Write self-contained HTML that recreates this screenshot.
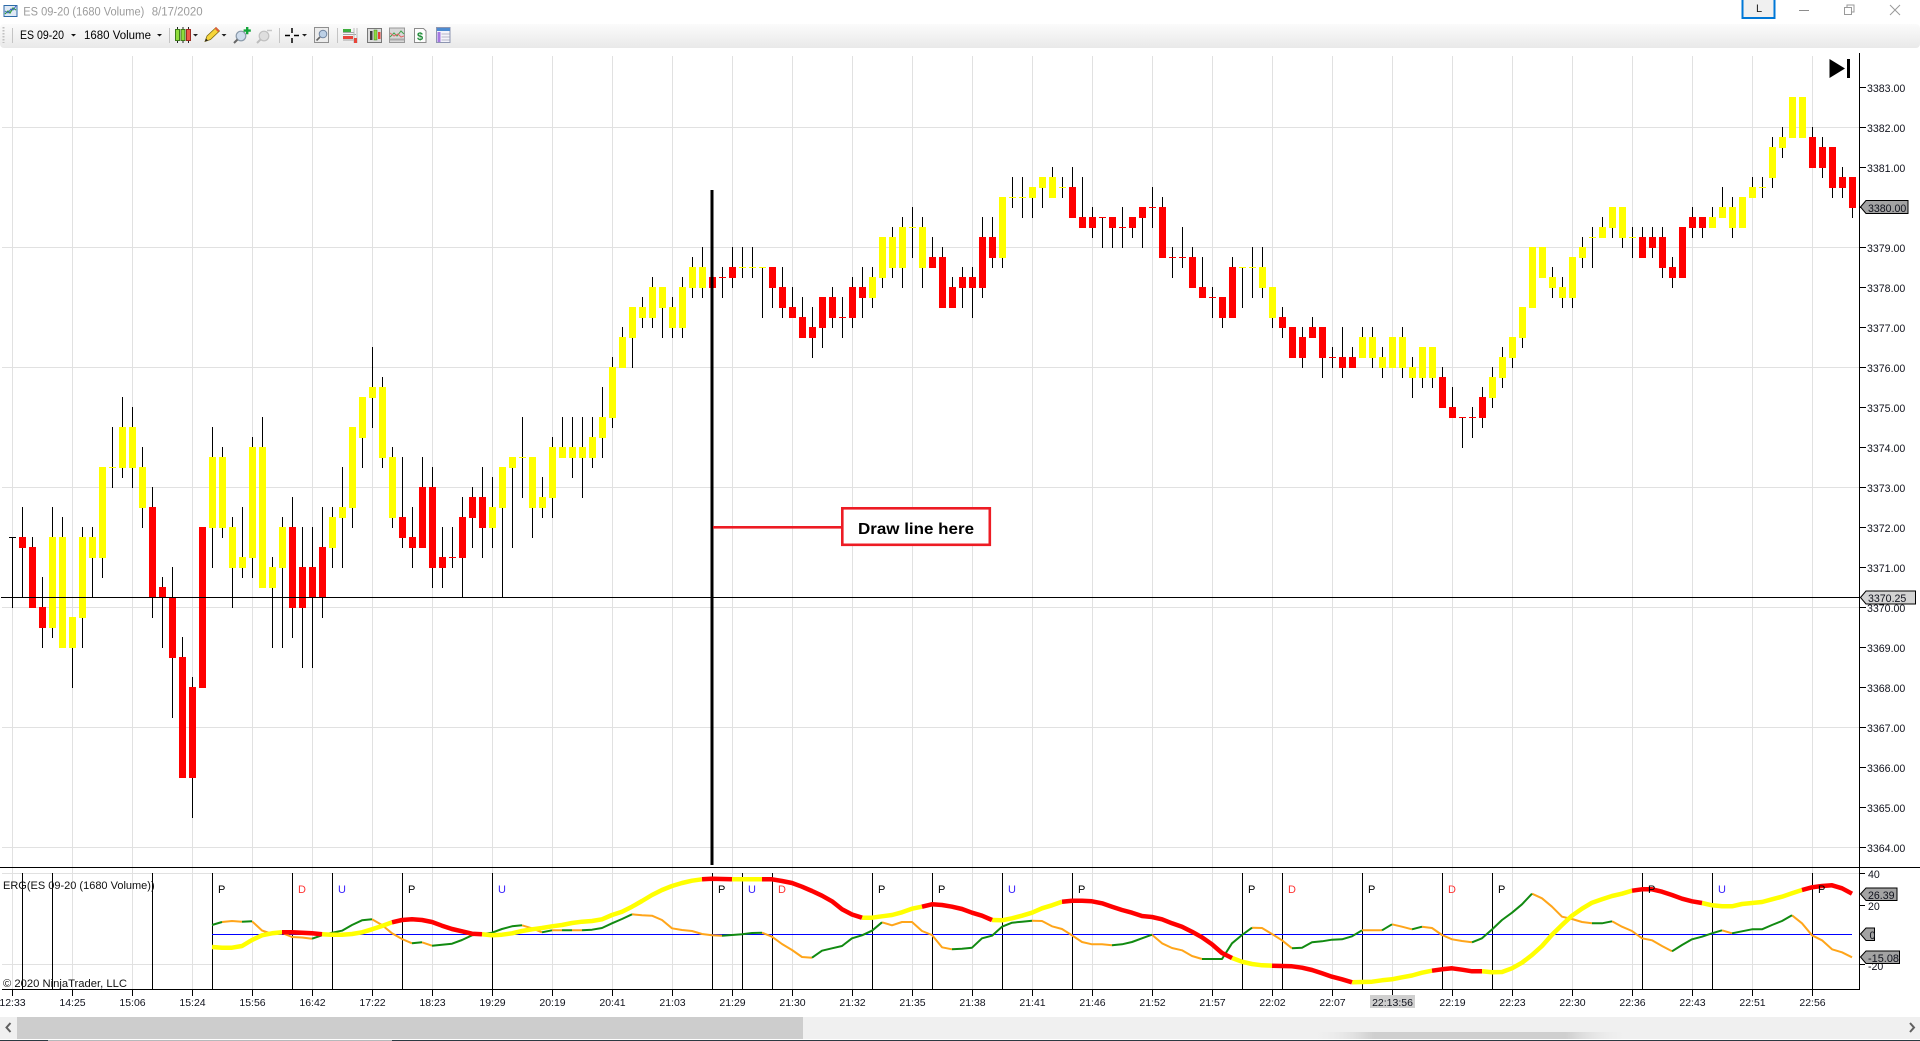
<!DOCTYPE html>
<html lang="en"><head><meta charset="utf-8"><title>ES 09-20 (1680 Volume)</title>
<style>
html,body{margin:0;padding:0;background:#fff;overflow:hidden}
svg{display:block}
text{font-family:"Liberation Sans",sans-serif}
.p text{font-size:10.6px;fill:#10121c}
.t text{font-size:10.5px;fill:#10121c;text-anchor:middle}
.s text{font-size:11.5px;fill:#000}
.l text{font-size:11px}
</style></head><body>
<svg width="1920" height="1041" viewBox="0 0 1920 1041" xmlns="http://www.w3.org/2000/svg">
<defs>
<linearGradient id="tb" x1="0" y1="0" x2="0" y2="1"><stop offset="0" stop-color="#fbfbfb"/><stop offset="1" stop-color="#e9e9e9"/></linearGradient>
<linearGradient id="sh" x1="0" y1="0" x2="0" y2="1"><stop offset="0" stop-color="#f0f0f0"/><stop offset="1" stop-color="#d0d0d0"/></linearGradient>
<linearGradient id="shx" x1="0" y1="0" x2="1" y2="0"><stop offset="0" stop-color="#f0f0f0" stop-opacity="0"/><stop offset=".2" stop-color="#cfcfcf"/><stop offset=".8" stop-color="#cfcfcf"/><stop offset="1" stop-color="#f0f0f0" stop-opacity="0"/></linearGradient>
</defs>
<rect width="1920" height="1041" fill="#fff"/>

<!-- title bar -->
<g>
<rect x="4" y="5.5" width="13" height="11" fill="#dfe9f5" stroke="#2d6aa8"/>
<path d="M5 14l3-3 2 2 3-5 3 2" fill="none" stroke="#2e9e3c" stroke-width="1.2"/>
<path d="M5 11l3 2 3-4 2 1 3-4" fill="none" stroke="#3a5fc0" stroke-width="1"/>
<text x="23.3" y="15.5" font-size="11.5" fill="#9b9b9b" textLength="121" lengthAdjust="spacingAndGlyphs">ES 09-20 (1680 Volume)</text>
<text x="151.7" y="15.5" font-size="11.5" fill="#9b9b9b" textLength="51" lengthAdjust="spacingAndGlyphs">8/17/2020</text>
<rect x="1742.5" y="-2" width="32" height="20" fill="#f0f0f0" stroke="#0078d7" stroke-width="2"/>
<text x="1759" y="12" font-size="11" fill="#222" text-anchor="middle">L</text>
<path d="M1799 10.5h10" stroke="#8c8c8c" stroke-width="1"/>
<path d="M1844.5 7.5h7v7h-7zM1847 7.5v-2.500h7v7h-2.500" fill="none" stroke="#9a9a9a" stroke-width="1"/>
<path d="M1890 5l10 10M1900 5l-10 10" stroke="#9a9a9a" stroke-width="1" fill="none"/>
</g>

<!-- toolbar -->
<rect x="0" y="24" width="1920" height="24" rx="4" fill="url(#tb)"/>
<g>
<path d="M3.500 27v16" stroke="#c0c0c0" stroke-width="2" stroke-dasharray="1.500 1.500"/>
<path d="M12.500 28v15M169.500 28v15M279.500 28v15M337.500 28v15" stroke="#c4c4c4"/>
<text x="20" y="39" font-size="11.500" fill="#000" textLength="44" lengthAdjust="spacingAndGlyphs">ES 09-20</text>
<path d="M71 34h5l-2.500 2.500z" fill="#111"/>
<text x="84" y="39" font-size="11.500" fill="#000" textLength="67" lengthAdjust="spacingAndGlyphs">1680 Volume</text>
<path d="M157 34h5l-2.500 2.500z" fill="#111"/>
<!-- candles icon -->
<path d="M177.500 27v16M183 27v16M188.500 27v16" stroke="#222"/>
<rect x="175.500" y="29.500" width="4" height="11" fill="#8fdc3c" stroke="#3d7a1a"/>
<rect x="181" y="29.500" width="4" height="11" fill="#8fdc3c" stroke="#3d7a1a"/>
<rect x="186.500" y="29.500" width="4" height="11" fill="#f05a4a" stroke="#9c2a20"/>
<path d="M193 34h5l-2.500 2.500z" fill="#222"/>
<!-- pencil -->
<path d="M205 41.500l2-5.500 9-8.500 3.500 3.500-9 8.500z" fill="#f6d53a" stroke="#7d6a12" stroke-width=".8"/>
<path d="M214.500 28.500l3.500 3.500 1.500-1.500-3.500-3.500z" fill="#e0603a"/>
<path d="M205 41.500l1-3 2 2z" fill="#222"/>
<path d="M221.500 34h5l-2.500 2.500z" fill="#222"/>
<!-- zoom in -->
<circle cx="241" cy="36" r="4.800" fill="#cfdcec" stroke="#8a9aaa" stroke-width="1.200"/>
<path d="M237.500 39.500l-3.500 3.500" stroke="#666" stroke-width="2"/>
<path d="M246 28.500h2.400v2.400h2.400v2.400h-2.400v2.400h-2.400v-2.400h-2.400v-2.400h2.400z" fill="#13a53a" transform="translate(0 -1.500)"/>
<!-- zoom out disabled -->
<circle cx="264" cy="36" r="4.800" fill="#dedede" stroke="#c0c0c0" stroke-width="1.200"/>
<path d="M260.500 39.500l-3.500 3.500" stroke="#bdbdbd" stroke-width="2"/>
<path d="M267 30.500h5" stroke="#c8c8c8" stroke-width="1.500"/>
<!-- crosshair -->
<path d="M292 28v5M292 38v5M285 35.500h5M294 35.500h5" stroke="#000" stroke-width="1.500"/>
<path d="M302 34h5l-2.500 2.500z" fill="#222"/>
<!-- box magnifier -->
<rect x="314.500" y="27.500" width="14" height="15" fill="#ececec" stroke="#8f8f8f"/>
<circle cx="323" cy="34" r="3.800" fill="#bcd0e6" stroke="#6f84a0"/>
<path d="M320 37l-3.500 3.500" stroke="#666" stroke-width="1.600"/>
<!-- panel icon -->
<path d="M343 29h8v3h-8z" fill="#3fae3f"/><path d="M343 36h10v3h-10z" fill="#e8443a"/>
<path d="M343 32.500h11M343 34.500h13M343 40h13" stroke="#8a8a8a" stroke-width=".8"/>
<path d="M354 28v15M357 28v15" stroke="#bbb"/>
<rect x="354" y="38" width="3" height="5" fill="#e8443a"/>
<!-- boxed candles -->
<rect x="367.500" y="28.500" width="14" height="14" fill="#dcdcdc" stroke="#777"/>
<rect x="370" y="31" width="2.500" height="9" fill="#3b3b3b"/><rect x="374" y="30" width="3" height="10" fill="#8fdc3c" stroke="#3d7a1a" stroke-width=".5"/><rect x="378" y="32" width="2.500" height="7" fill="#e8443a"/>
<!-- line chart -->
<rect x="389.500" y="28" width="15" height="14.500" fill="#d8d8d8" stroke="#999"/>
<path d="M390 37l4-4 3 3 4-5 3 3" fill="none" stroke="#3ea24a"/><path d="M390 33l4 3 4-2 3 3 3-1" fill="none" stroke="#e06b6b"/>
<path d="M390 39.500h14" stroke="#aaa" stroke-width="2"/>
<!-- $ doc -->
<path d="M414.500 28.500h9l2.500 2.500v11.500h-11.500z" fill="#fdfdfd" stroke="#8c8c8c"/>
<text x="420" y="40" font-size="11" font-weight="bold" fill="#1c8a34" text-anchor="middle">$</text>
<!-- table -->
<rect x="436.500" y="27.500" width="13.500" height="15" fill="#f3f3fb" stroke="#8d95b0"/>
<rect x="437" y="28" width="13" height="3" fill="#4d8ad0"/>
<rect x="437.500" y="32" width="3" height="10" fill="#a679e0"/>
<path d="M441.500 34h8M441.500 37h8M441.500 40h8" stroke="#b7b7c7"/>
</g>

<!-- grid -->
<path shape-rendering="crispEdges" stroke="#e1e1e1" stroke-width="1" fill="none" d="M12.500 56V989M72.500 56V989M132.500 56V989M192.500 56V989M252.500 56V989M312.500 56V989M372.500 56V989M432.500 56V989M492.500 56V989M552.500 56V989M612.500 56V989M672.500 56V989M732.500 56V989M792.500 56V989M852.500 56V989M912.500 56V989M972.500 56V989M1032.500 56V989M1092.500 56V989M1152.500 56V989M1212.500 56V989M1272.500 56V989M1332.500 56V989M1392.500 56V989M1452.500 56V989M1512.500 56V989M1572.500 56V989M1632.500 56V989M1692.500 56V989M1752.500 56V989M1812.500 56V989M2 127.500H1859M2 247.500H1859M2 367.500H1859M2 487.500H1859M2 607.500H1859M2 727.500H1859M2 847.500H1859M2 873.500H1859M2 964.500H1859"/>

<!-- wicks -->
<path shape-rendering="crispEdges" stroke="#000" stroke-width="1" fill="none" d="M12.500 537V608M22.500 507V598M32.500 537V608M42.500 577V648M52.500 507V638M62.500 517V648M72.500 617V688M82.500 527V648M92.500 527V598M102.500 467V578M112.500 427V488M122.500 397V478M132.500 407V488M142.500 447V528M152.500 487V618M162.500 577V648M172.500 567V718M182.500 637V778M192.500 677V818M202.500 527V688M212.500 427V568M222.500 447V538M232.500 517V608M242.500 507V578M252.500 437V578M262.500 417V588M272.500 557V648M282.500 517V648M292.500 497V638M302.500 527V668M312.500 527V668M322.500 507V618M332.500 507V568M342.500 467V568M352.500 427V528M362.500 397V468M372.500 347V428M382.500 377V468M392.500 447V528M402.500 457V548M412.500 507V568M422.500 457V548M432.500 467V588M442.500 527V588M452.500 527V568M462.500 497V598M472.500 487V548M482.500 467V558M492.500 477V548M502.500 467V598M512.500 457V548M522.500 417V498M532.500 457V538M542.500 477V518M552.500 437V518M562.500 417V458M572.500 417V478M582.500 417V498M592.500 417V468M602.500 387V458M612.500 357V428M622.500 327V368M632.500 307V368M642.500 297V328M652.500 277V328M662.500 287V338M672.500 297V338M682.500 277V338M692.500 257V298M702.500 247V298M722.500 267V298M732.500 247V288M742.500 247V278M752.500 247V278M762.500 267V318M772.500 267V308M782.500 267V318M792.500 287V318M802.500 297V338M812.500 307V358M822.500 297V348M832.500 287V328M842.500 297V338M852.500 277V328M862.500 267V318M872.500 267V308M882.500 237V288M892.500 227V278M902.500 217V288M912.500 207V258M922.500 217V288M932.500 237V268M942.500 247V308M952.500 277V308M962.500 267V308M972.500 267V318M982.500 217V298M992.500 217V268M1002.500 197V268M1012.500 177V208M1022.500 177V218M1032.500 187V218M1042.500 177V208M1052.500 167V198M1062.500 177V198M1072.500 167V218M1082.500 177V228M1092.500 207V238M1102.500 217V248M1112.500 217V248M1122.500 207V248M1132.500 217V238M1142.500 207V248M1152.500 187V228M1162.500 197V258M1172.500 247V278M1182.500 227V268M1192.500 247V288M1202.500 257V298M1212.500 287V318M1222.500 297V328M1232.500 257V318M1242.500 267V308M1252.500 247V298M1262.500 247V298M1272.500 287V328M1282.500 307V338M1292.500 327V358M1302.500 327V368M1312.500 317V338M1322.500 327V378M1332.500 347V368M1342.500 327V378M1352.500 347V368M1362.500 327V358M1372.500 327V368M1382.500 347V378M1392.500 337V368M1402.500 327V378M1412.500 357V398M1422.500 347V388M1432.500 347V388M1442.500 367V408M1452.500 387V418M1462.500 417V448M1472.500 407V438M1482.500 387V428M1492.500 367V408M1502.500 347V388M1512.500 337V368M1522.500 307V348M1532.500 247V308M1542.500 247V278M1552.500 267V298M1562.500 277V308M1572.500 257V308M1582.500 237V268M1592.500 227V268M1602.500 217V238M1612.500 207V238M1622.500 207V248M1632.500 227V258M1642.500 227V258M1652.500 227V258M1662.500 227V278M1672.500 257V288M1682.500 227V278M1692.500 207V238M1702.500 217V238M1712.500 207V228M1722.500 187V218M1732.500 197V238M1742.500 197V228M1752.500 177V198M1762.500 177V198M1772.500 137V188M1782.500 127V158M1792.500 97V138M1802.500 97V138M1812.500 127V168M1822.500 137V178M1832.500 147V198M1842.500 167V198M1852.500 177V218M9 537.500H16"/>

<!-- yellow bodies -->
<path shape-rendering="crispEdges" stroke="#ffff00" stroke-width="7" fill="none" d="M52.500 537V628M62.500 537V648M72.500 617V648M82.500 537V618M92.500 537V558M102.500 467V558M112.500 467V468M122.500 427V468M132.500 427V468M142.500 467V508M212.500 457V528M222.500 457V528M232.500 527V568M242.500 557V568M252.500 447V558M262.500 447V588M272.500 567V588M282.500 527V568M332.500 517V548M342.500 507V518M352.500 427V508M362.500 397V438M372.500 387V398M382.500 387V458M392.500 457V518M492.500 507V528M502.500 467V508M512.500 457V468M522.500 457V458M532.500 457V508M542.500 497V508M552.500 447V498M562.500 447V458M572.500 447V458M582.500 447V458M592.500 437V458M602.500 417V438M612.500 367V418M622.500 337V368M632.500 307V338M642.500 307V318M652.500 287V318M662.500 287V308M672.500 307V328M682.500 287V328M692.500 267V288M702.500 267V288M742.500 267V268M752.500 267V268M762.500 267V268M872.500 277V298M882.500 237V278M892.500 237V268M902.500 227V268M912.500 227V228M922.500 227V268M1002.500 197V258M1012.500 197V198M1022.500 197V198M1032.500 187V198M1042.500 177V188M1052.500 177V198M1062.500 187V188M1242.500 267V268M1252.500 267V268M1262.500 267V288M1272.500 287V318M1362.500 337V358M1372.500 337V358M1382.500 357V368M1392.500 337V368M1402.500 337V368M1412.500 367V378M1422.500 347V378M1432.500 347V378M1492.500 377V398M1502.500 357V378M1512.500 337V358M1522.500 307V338M1532.500 247V308M1542.500 247V278M1552.500 277V288M1562.500 287V298M1572.500 257V298M1582.500 247V258M1592.500 237V238M1602.500 227V238M1612.500 207V228M1622.500 207V238M1632.500 237V238M1712.500 217V228M1722.500 207V218M1732.500 207V228M1742.500 197V228M1752.500 187V198M1762.500 187V188M1772.500 147V178M1782.500 137V148M1792.500 97V138M1802.500 97V138"/>

<!-- red bodies -->
<path shape-rendering="crispEdges" stroke="#ff0000" stroke-width="7" fill="none" d="M22.500 537V548M32.500 547V608M42.500 607V628M152.500 507V598M162.500 587V598M172.500 597V658M182.500 657V778M192.500 687V778M202.500 527V688M292.500 527V608M302.500 567V608M312.500 567V598M322.500 547V598M402.500 517V538M412.500 537V548M422.500 487V548M432.500 487V568M442.500 557V568M452.500 557V558M462.500 517V558M472.500 497V518M482.500 497V528M712.500 277V288M722.500 277V278M732.500 267V278M772.500 267V288M782.500 287V308M792.500 307V318M802.500 317V338M812.500 327V338M822.500 297V328M832.500 297V318M842.500 317V318M852.500 287V318M862.500 287V298M932.500 257V268M942.500 257V308M952.500 287V308M962.500 277V288M972.500 277V288M982.500 237V288M992.500 237V258M1072.500 187V218M1082.500 217V228M1092.500 217V228M1102.500 217V218M1112.500 217V228M1122.500 227V228M1132.500 217V228M1142.500 207V218M1152.500 207V208M1162.500 207V258M1172.500 257V258M1182.500 257V258M1192.500 257V288M1202.500 287V298M1212.500 297V298M1222.500 297V318M1232.500 267V318M1282.500 317V328M1292.500 327V358M1302.500 337V358M1312.500 327V338M1322.500 327V358M1332.500 357V358M1342.500 357V368M1352.500 357V368M1442.500 377V408M1452.500 407V418M1462.500 417V418M1472.500 417V418M1482.500 397V418M1642.500 237V258M1652.500 237V248M1662.500 237V268M1672.500 267V278M1682.500 227V278M1692.500 217V228M1702.500 217V228M1812.500 137V168M1822.500 147V168M1832.500 147V188M1842.500 177V188M1852.500 177V208"/>

<!-- horizontal price line -->
<path shape-rendering="crispEdges" d="M1 597.500H1860" stroke="#000" stroke-width="1.200"/>

<!-- panel separators and axes -->
<path shape-rendering="crispEdges" stroke="#000" stroke-width="1" fill="none" d="M0 867.500H1920M2 989.500H1860M1859.500 53V990"/>
<path shape-rendering="crispEdges" stroke="#000" stroke-width="1" fill="none" d="M1860 87.500h6M1860 127.500h6M1860 167.500h6M1860 207.500h6M1860 247.500h6M1860 287.500h6M1860 327.500h6M1860 367.500h6M1860 407.500h6M1860 447.500h6M1860 487.500h6M1860 527.500h6M1860 567.500h6M1860 607.500h6M1860 647.500h6M1860 687.500h6M1860 727.500h6M1860 767.500h6M1860 807.500h6M1860 847.500h6M1860 873.500h5M1860 905.500h5M1860 964.500h5M12.500 990v6M72.500 990v6M132.500 990v6M192.500 990v6M252.500 990v6M312.500 990v6M372.500 990v6M432.500 990v6M492.500 990v6M552.500 990v6M612.500 990v6M672.500 990v6M732.500 990v6M792.500 990v6M852.500 990v6M912.500 990v6M972.500 990v6M1032.500 990v6M1092.500 990v6M1152.500 990v6M1212.500 990v6M1272.500 990v6M1332.500 990v6M1392.500 990v6M1452.500 990v6M1512.500 990v6M1572.500 990v6M1632.500 990v6M1692.500 990v6M1752.500 990v6M1812.500 990v6"/>

<!-- price labels -->
<g class="p">
<text x="1867" y="92">3383.00</text><text x="1867" y="132">3382.00</text><text x="1867" y="172">3381.00</text><text x="1867" y="252">3379.00</text><text x="1867" y="292">3378.00</text><text x="1867" y="332">3377.00</text><text x="1867" y="372">3376.00</text><text x="1867" y="412">3375.00</text><text x="1867" y="452">3374.00</text><text x="1867" y="492">3373.00</text><text x="1867" y="532">3372.00</text><text x="1867" y="572">3371.00</text><text x="1867" y="612">3370.00</text><text x="1867" y="652">3369.00</text><text x="1867" y="692">3368.00</text><text x="1867" y="732">3367.00</text><text x="1867" y="772">3366.00</text><text x="1867" y="812">3365.00</text><text x="1867" y="852">3364.00</text>
<text x="1868" y="878">40</text><text x="1868" y="910">20</text><text x="1868" y="970">-20</text>
</g>

<!-- price tags -->
<path d="M1860.500 207l5.500-6.500h42v13h-42z" fill="#a3a3a3" stroke="#000"/>
<path d="M1860.500 597.500l5.500-6.500h49.500v13h-49.500z" fill="#d3d3d3" stroke="#000"/>
<path d="M1860.500 894l5.500-6h31v12.500h-31z" fill="#a3a3a3" stroke="#000"/>
<path d="M1860.500 934l5.500-6h8.500v12.500h-8.500z" fill="#a3a3a3" stroke="#000"/>
<path d="M1860.500 957l5.500-6h33.500v12.500h-33.500z" fill="#a3a3a3" stroke="#000"/>
<g class="p">
<text x="1868" y="212">3380.00</text><text x="1868" y="602">3370.25</text>
<text x="1868" y="899">26.39</text><text x="1869.500" y="939">0</text><text x="1868" y="962" textLength="31" lengthAdjust="spacingAndGlyphs">-15.08</text>
</g>

<!-- skip to end icon -->
<path d="M1829.500 59L1845 68.500L1829.500 78z" fill="#000"/><rect x="1847" y="59" width="3" height="19" fill="#000"/>

<!-- indicator vertical lines -->
<path shape-rendering="crispEdges" stroke="#000" stroke-width="1" fill="none" d="M22.500 873V989M52.500 873V989M152.500 873V989M212.500 873V989M292.500 873V989M332.500 873V989M402.500 873V989M492.500 873V989M712.500 873V989M742.500 873V989M772.500 873V989M872.500 873V989M932.500 873V989M1002.500 873V989M1072.500 873V989M1242.500 873V989M1282.500 873V989M1362.500 873V989M1442.500 873V989M1492.500 873V989M1642.500 873V989M1712.500 873V989M1812.500 873V989"/>
<path shape-rendering="crispEdges" d="M212 934.500H1852" stroke="#0000ff" stroke-width="1"/>

<!-- thin indicator -->
<path fill="none" stroke="#ffa51a" stroke-width="2" stroke-linejoin="round" d="M222 922 232 921 242 921.700M252 921.300 262 930.500 272 934 282 933 292 937 302 937.500 312 938.700M372 919.300 382 925 392 933.300 402 939 412 943.300M422 942.300 432 945.700M522 925.300 532 928.300 542 932.300M552 930.300 562 930.300M572 930.300 582 930.300M632 914.300 642 915.300 652 915.700 662 920 672 928.300 682 930 692 931 702 934 712 935.300 722 935.700M762 932.700 772 936.700 782 944 792 950 802 957 812 957.700M882 922.300 892 925.300 902 922 912 922 922 931 932 935 942 947.300 952 949.300M1032 920.700 1042 921 1052 926.300 1062 929 1072 935.300 1082 942 1092 944.300 1102 944.300 1112 945.300M1152 934.700 1162 943.300 1172 948 1182 950.300 1192 956 1202 959M1252 927.700 1262 928 1272 934 1282 940.300 1292 948.300M1362 930.300 1372 930.300 1382 930.300M1392 924.300 1402 926.700 1412 929.300M1422 926.700 1432 928 1442 935 1452 939.300 1462 941 1472 942.300M1532 893.700 1542 898.300 1552 906.700 1562 916.700 1572 919 1582 922 1592 923.300M1612 921.300 1622 926.700 1632 931 1642 938.300 1652 940.300 1662 946 1672 951.300M1722 930.300 1732 933.300M1792 915.300 1802 923.300 1812 935.300 1822 940.300 1832 949.300 1842 952.300 1852 957.300"/>
<path fill="none" stroke="#118a11" stroke-width="2" stroke-linejoin="round" d="M212 925 222 922M242 921.700 252 921.300M312 938.700 322 935.300 332 932.700 342 930.700 352 925 362 920.300 372 919.300M412 943.300 422 942.300M432 945.700 442 944.700 452 943.700 462 940 472 935.300 482 934 492 932.700 502 929 512 926.300 522 925.300M542 932.300 552 930.300M562 930.300 572 930.300M582 930.300 592 929.700 602 928 612 923.300 622 919 632 914.300M722 935.700 732 935 742 934.300 752 933 762 932.700M812 957.700 822 950.700 832 948.300 842 946 852 938.300 862 935.300 872 930.700 882 922.300M952 949.300 962 948.700 972 947.700 982 938.300 992 935.700 1002 926.700 1012 922.700 1022 921.700 1032 920.700M1112 945.300 1122 944.300 1132 942 1142 938.300 1152 934.700M1202 959 1212 959 1222 959 1232 943.300 1242 935 1252 927.700M1292 948.300 1302 947.700 1312 942.300 1322 941.300 1332 939.700 1342 939.300 1352 936.300 1362 930.300M1382 930.300 1392 924.300M1412 929.300 1422 926.700M1472 942.300 1482 938.300 1492 929.500 1502 920 1512 912.700 1522 904.300 1532 893.700M1592 923.300 1602 923.300 1612 921.300M1672 951.300 1682 945 1692 939.300 1702 936.700 1712 933.300 1722 930.300M1732 933.300 1742 931.300 1752 929.300 1762 929.300 1772 925 1782 921 1792 915.300"/>

<!-- thick indicator -->
<path fill="none" stroke="#ffff00" stroke-width="4.500" stroke-linejoin="round" d="M212 947 222 947.700 232 947.700 242 946 252 940 262 935.300 272 933.300 282 932.300M322 934.300 332 934.700 342 934.700 352 934 362 932.300 372 929.300 382 926 392 922.300M482 934.300 492 935.300 502 934.700 512 933.300 522 931 532 929.300 542 928 552 926.300 562 925 572 923 582 921.700 592 921 602 919.300 612 915 622 911.700 632 906.700 642 901 652 895 662 890 672 886 682 883 692 880.700 702 879.300M732 879.300 742 879.300 752 879.300 762 879.300M862 917.700 872 917.700 882 916.300 892 915 902 912.300 912 908.700 922 906.700M992 920 1002 920.300 1012 918.300 1022 915.700 1032 912.700 1042 908.300 1052 905.300 1062 901.700M1232 958 1242 961.700 1252 964 1262 965.300 1272 965.700M1352 982.300 1362 982 1372 981.700 1382 980.300 1392 979.300 1402 977.300 1412 975.500 1422 972.700 1432 970.700M1482 971.300 1492 972.300 1502 972 1512 968.300 1522 962.700 1532 955 1542 946 1552 934.700 1562 925 1572 915.700 1582 908.700 1592 902.700 1602 899.300 1612 896 1622 893.700 1632 890.700M1702 903 1712 905.300 1722 906.300 1732 906.300 1742 904 1752 903 1762 902 1772 899.300 1782 896.700 1792 893.300 1802 890"/>
<path fill="none" stroke="#ff0000" stroke-width="4.500" stroke-linejoin="round" d="M282 932.300 292 932.300 302 932.700 312 933.300 322 934.300M392 922.300 402 920 412 919.300 422 920 432 922 442 925.700 452 929 462 931.300 472 933.700 482 934.300M702 879.300 712 878.700 722 879 732 879.300M762 879.300 772 879.300 782 881 792 883 802 886.700 812 891 822 895.700 832 901.300 842 909.300 852 914.500 862 917.700M922 906.700 932 904.300 942 905 952 906.700 962 909 972 912.700 982 915.700 992 920M1062 901.700 1072 900.700 1082 900.700 1092 901.300 1102 903.300 1112 906.700 1122 910 1132 912.700 1142 916 1152 917 1162 919.300 1172 923.300 1182 926.700 1192 931.700 1202 937.300 1212 944.300 1222 953 1232 958M1272 965.700 1282 966 1292 966.300 1302 967.700 1312 970 1322 973.300 1332 976.700 1342 979.300 1352 982.300M1432 970.700 1442 969.300 1452 968.300 1462 969.700 1472 971.300 1482 971.300M1632 890.700 1642 889.300 1652 889.300 1662 891.700 1672 895 1682 898.700 1692 901.300 1702 903M1802 890 1812 887.300 1822 886 1832 885.300 1842 888.300 1852 893.700"/>

<!-- indicator labels -->
<g class="l">
<text x="3" y="889" fill="#111">ERG(ES 09-20 (1680 Volume))</text>
<text x="3" y="987" fill="#111" textLength="124" lengthAdjust="spacingAndGlyphs">© 2020 NinjaTrader, LLC</text>
<text x="218" y="893">P</text><text x="298" y="893" fill="#f33">D</text><text x="338" y="893" fill="#3a22ff">U</text><text x="408" y="893">P</text><text x="498" y="893" fill="#3a22ff">U</text><text x="718" y="893">P</text><text x="748" y="893" fill="#3a22ff">U</text><text x="778" y="893" fill="#f33">D</text><text x="878" y="893">P</text><text x="938" y="893">P</text><text x="1008" y="893" fill="#3a22ff">U</text><text x="1078" y="893">P</text><text x="1248" y="893">P</text><text x="1288" y="893" fill="#f33">D</text><text x="1368" y="893">P</text><text x="1448" y="893" fill="#f33">D</text><text x="1498" y="893">P</text><text x="1648" y="893">P</text><text x="1718" y="893" fill="#3a22ff">U</text><text x="1818" y="893">P</text>
</g>

<!-- time labels -->
<rect x="1370" y="995" width="45" height="13" fill="#cfcfcf"/>
<g class="t">
<text x="12.500" y="1006">12:33</text><text x="72.500" y="1006">14:25</text><text x="132.500" y="1006">15:06</text><text x="192.500" y="1006">15:24</text><text x="252.500" y="1006">15:56</text><text x="312.500" y="1006">16:42</text><text x="372.500" y="1006">17:22</text><text x="432.500" y="1006">18:23</text><text x="492.500" y="1006">19:29</text><text x="552.500" y="1006">20:19</text><text x="612.500" y="1006">20:41</text><text x="672.500" y="1006">21:03</text><text x="732.500" y="1006">21:29</text><text x="792.500" y="1006">21:30</text><text x="852.500" y="1006">21:32</text><text x="912.500" y="1006">21:35</text><text x="972.500" y="1006">21:38</text><text x="1032.500" y="1006">21:41</text><text x="1092.500" y="1006">21:46</text><text x="1152.500" y="1006">21:52</text><text x="1212.500" y="1006">21:57</text><text x="1272.500" y="1006">22:02</text><text x="1332.500" y="1006">22:07</text><text x="1392.500" y="1006">22:13:56</text><text x="1452.500" y="1006">22:19</text><text x="1512.500" y="1006">22:23</text><text x="1572.500" y="1006">22:30</text><text x="1632.500" y="1006">22:36</text><text x="1692.500" y="1006">22:43</text><text x="1752.500" y="1006">22:51</text><text x="1812.500" y="1006">22:56</text>
</g>

<!-- thick drawn vertical line and callout -->
<rect x="710.500" y="190" width="3" height="675" fill="#000"/>
<rect x="713" y="526" width="128" height="2.600" fill="#ed1c24"/>
<rect x="842.300" y="508.300" width="147.500" height="36.500" fill="#fff" stroke="#ed1c24" stroke-width="2.600"/>
<text x="858" y="534" font-size="16" font-weight="bold" fill="#000" textLength="116" lengthAdjust="spacingAndGlyphs">Draw line here</text>

<!-- scrollbar -->
<rect x="0" y="1017" width="1920" height="22" fill="#f0f0f0"/>
<rect x="1310" y="1032" width="320" height="7" fill="url(#shx)"/>
<rect x="17" y="1017" width="786" height="22" fill="#cdcdcd"/>
<path d="M10.500 1023l-4 4.500 4 4.500" fill="none" stroke="#606060" stroke-width="2"/>
<path d="M1910 1023l4 4.500-4 4.500" fill="none" stroke="#606060" stroke-width="2"/>
<path shape-rendering="crispEdges" d="M0 1040.500H48" stroke="#2b3a42"/>
<path shape-rendering="crispEdges" d="M48 1040.500H392" stroke="#b5b9bb"/>
<path shape-rendering="crispEdges" d="M392 1040.500H1920" stroke="#2b3a42"/>
</svg>
</body></html>
